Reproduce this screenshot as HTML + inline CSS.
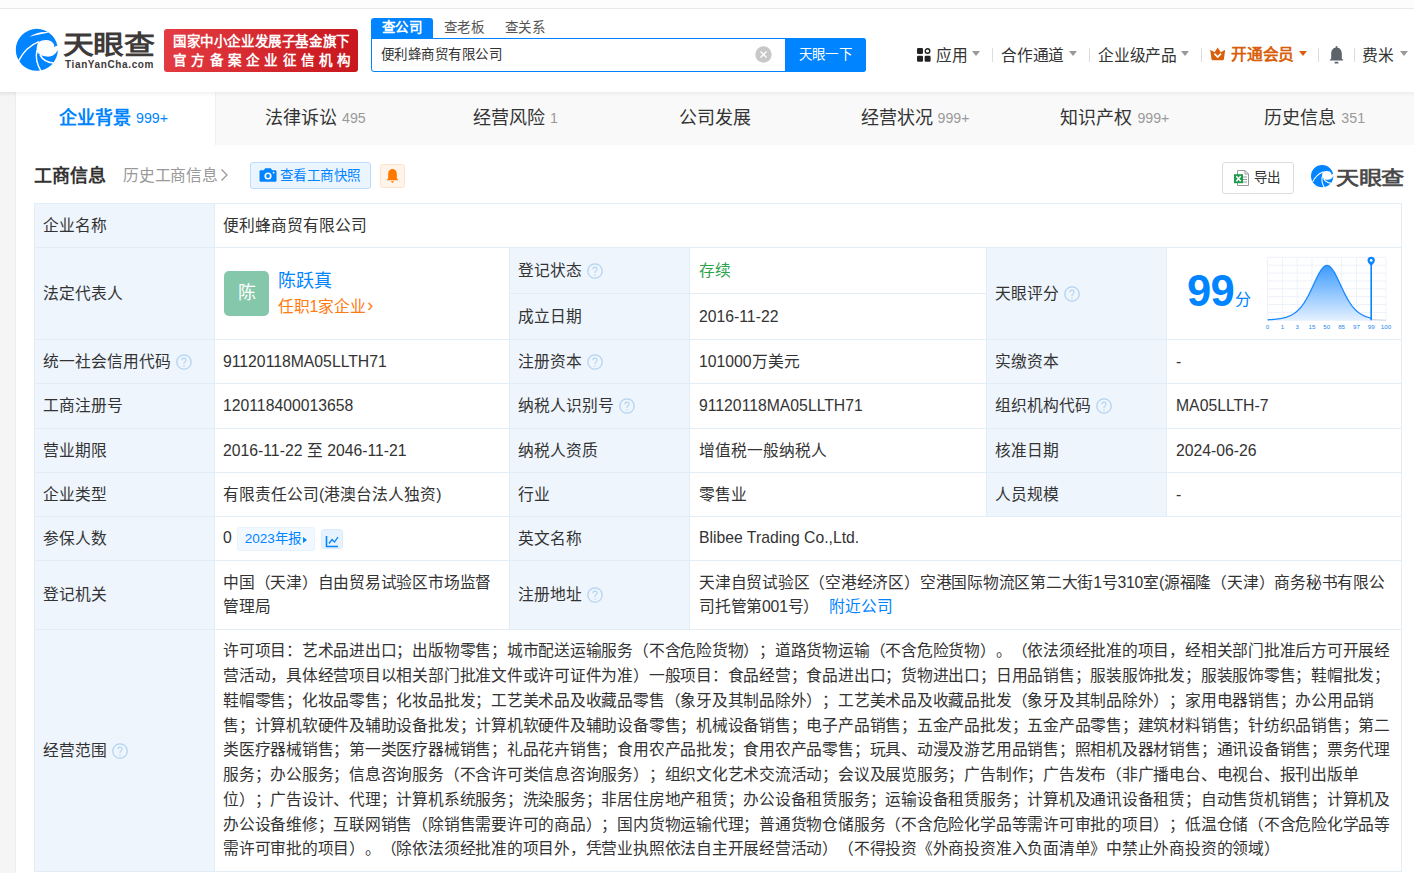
<!DOCTYPE html>
<html lang="zh-CN"><head><meta charset="utf-8">
<style>
*{margin:0;padding:0;box-sizing:border-box}
html,body{width:1414px;height:873px;overflow:hidden}
body{background:#f5f5f5;font-family:"Liberation Sans",sans-serif;color:#333;position:relative;text-spacing-trim:space-all;-webkit-font-smoothing:antialiased}
.a{position:absolute;white-space:nowrap}
#top{position:absolute;left:0;top:0;width:1414px;height:92px;background:#fff;border-top:8px solid #fdfdfd;box-shadow:0 1px 4px rgba(0,0,0,.05)}
#topline{position:absolute;left:0;top:8px;width:1414px;height:1px;background:#e9e9e9;z-index:3}
#card{position:absolute;left:16px;top:92px;width:1410px;height:800px;background:#fff}
#tabs{position:absolute;left:16px;top:92px;width:1398px;height:53px;background:#f9f9f9}
.tab{position:absolute;top:0;height:53px;width:199.8px;text-align:center;font-size:18px;line-height:52px;color:#333}
.tab .n{font-size:14.2px;color:#999;margin-left:5px;position:relative;top:-1.5px}
.tab.on{background:#fff;color:#0084ff;font-weight:bold}
.tab.on .n{color:#0084ff;font-weight:normal}
.tbl{position:absolute;left:34px;top:203px;width:1368px;height:669px;border:1px solid #e3edf6}
.c{position:absolute;font-size:15.75px;line-height:22px;color:#333;display:flex;align-items:center;white-space:nowrap}
.l{background:#eef5fd}
.q{display:block;flex:none;margin-left:5px;position:relative;top:0}
.blue{color:#0084ff}
.hl{position:absolute;height:1px;background:#e3edf6}
.vl{position:absolute;width:1px;background:#e3edf6}
.ml{position:relative;top:0.3px;line-height:24.75px;white-space:nowrap;letter-spacing:-0.23px}
.near{color:#0084ff;margin-left:10px}
.rep{position:relative;top:0.5px;border:1px solid #e9f2fc;display:inline-block;height:24px;line-height:22px;padding:0 7px 0 7px;margin-left:5px;background:#f2f8ff;border-radius:3px;color:#0084ff;font-size:13.5px}
.tri{display:inline-block;width:0;height:0;border-left:4.5px solid #0084ff;border-top:3.5px solid transparent;border-bottom:3.5px solid transparent;margin-left:2px;vertical-align:0px}
.chi{position:relative;top:0.5px;border:1px solid #dcebfb;display:inline-block;width:22px;height:20px;margin-left:6px;background:#e6f2ff;border-radius:3px;text-align:center;padding-top:2px}
.nv{top:45px;font-size:15.75px;line-height:22px;color:#333;letter-spacing:-0.23px}
.tr{position:absolute;top:51px;width:0;height:0;border-left:4.5px solid transparent;border-right:4.5px solid transparent;border-top:5px solid #999}
.sep{position:absolute;top:48px;width:1px;height:14px;background:#ddd}
</style></head><body>
<div id="top"></div>
<div id="topline"></div>

<!-- logo -->
<svg class="a" style="left:12px;top:25px" width="50" height="50" viewBox="0 0 50 50">
<circle cx="24.8" cy="24.8" r="21" fill="#0084ff"/>
<path fill="#fff" d="M26.6 17C31 14.2 39.5 13.8 42 19.5C42.5 20.5 42.2 21.5 41.6 22L47 20V24C45.8 25 45 26 44.5 27C42 31 38 31.8 35 31.6C31.5 31.3 29.5 30.8 27.8 29.6C26 28.3 24.8 26.8 24.6 25.8C24.6 21.5 25.3 18.5 26.6 17Z"/>
<path stroke="#fff" stroke-width="1.5" fill="none" d="M6.5 36.2C10 29 17 20.5 26.9 16.6"/>
<path stroke="#fff" stroke-width="1.5" fill="none" d="M25 25.5C23.3 32 25.3 40 29.2 46.5"/>
<path stroke="#fff" stroke-width="1.7" fill="none" d="M28 29.8C30.5 34.5 35 37.5 41.5 38"/>
<path fill="#fff" d="M17.5 11.8C23 8 31 6.3 37 7.5C31 8.7 24 10 17.5 11.8Z"/>
</svg>
<div class="a" style="left:63px;top:27.5px;font-size:30px;line-height:40px;font-weight:bold;color:#3e3a39;letter-spacing:-0.5px;transform:scale(1.03,0.857);transform-origin:0 0">天眼查</div>
<div class="a" style="left:65px;top:58.2px;font-size:10px;line-height:14px;font-weight:bold;color:#3e3a39;letter-spacing:0.62px">TianYanCha.com</div>

<!-- red badge -->
<div class="a" style="left:164px;top:29px;width:194px;height:43px;border-radius:3px;background:linear-gradient(100deg,#e33c42,#c8161d)"></div>
<div class="a" style="left:173px;top:33px;font-size:13.5px;font-weight:bold;color:#fff;line-height:18px;letter-spacing:0.6px">国家中小企业发展子基金旗下</div>
<div class="a" style="left:173px;top:52px;font-size:13.5px;font-weight:bold;color:#fff;line-height:18px;letter-spacing:5.25px">官方备案企业征信机构</div>

<!-- search -->
<div class="a" style="left:371px;top:18px;width:62px;height:21px;background:#0084ff;border-radius:3px 3px 0 0"></div>
<div class="a" style="left:382px;top:18px;font-size:13.5px;line-height:20px;color:#fff;font-weight:bold;letter-spacing:0.45px">查公司</div>
<div class="a" style="left:444px;top:18px;font-size:13.5px;line-height:20px;color:#555;letter-spacing:0.45px">查老板</div>
<div class="a" style="left:505px;top:18px;font-size:13.5px;line-height:20px;color:#555;letter-spacing:0.45px">查关系</div>
<div class="a" style="left:371px;top:38px;width:495px;height:34px;border:1px solid #0084ff;border-radius:0 3px 3px 3px;background:#fff"></div>
<div class="a" style="left:381px;top:45px;font-size:13.5px;line-height:20px;color:#333;letter-spacing:0.45px">便利蜂商贸有限公司</div>
<svg class="a" style="left:755px;top:46px" width="17" height="17" viewBox="0 0 17 17"><circle cx="8.5" cy="8.5" r="8.2" fill="#c8c8c8"/><path d="M5.5 5.5l6 6M11.5 5.5l-6 6" stroke="#fff" stroke-width="1.3"/></svg>
<div class="a" style="left:785px;top:38px;width:81px;height:34px;background:#0084ff;border-radius:0 3px 3px 0;color:#fff;font-size:13.5px;line-height:34px;text-align:center;letter-spacing:0.45px">天眼一下</div>

<!-- right nav -->
<svg class="a" style="left:917px;top:48px" width="14" height="14" viewBox="0 0 14 14"><rect x="0" y="0" width="6" height="6" rx="1.3" fill="#222"/><circle cx="10.5" cy="3" r="2.3" fill="none" stroke="#222" stroke-width="1.4"/><rect x="0" y="7.7" width="6" height="6" rx="1.3" fill="#222"/><rect x="7.6" y="7.7" width="6" height="6" rx="1.3" fill="#222"/></svg>
<div class="a nv" style="left:936px">应用</div><i class="tr" style="left:972px"></i><i class="sep" style="left:992px"></i>
<div class="a nv" style="left:1001px">合作通道</div><i class="tr" style="left:1069px"></i><i class="sep" style="left:1089px"></i>
<div class="a nv" style="left:1098px">企业级产品</div><i class="tr" style="left:1181px"></i><i class="sep" style="left:1201px"></i>
<svg class="a" style="left:1210px;top:47px" width="16" height="14" viewBox="0 0 16 14"><path d="M.2 2.8L4.6 5.2 7.7 .6 10.8 5.2 15.2 2.8 13.9 12.2Q13.7 13.3 12.7 13.3H2.7Q1.7 13.3 1.5 12.2Z" fill="#d9600b"/><path d="M4.4 6.6L7.7 10.1 11 6.6" fill="none" stroke="#fff" stroke-width="1.7"/></svg>
<div class="a nv" style="left:1231px;top:44px;color:#d9600b;font-weight:bold">开通会员</div><i class="tr" style="left:1299px;border-top-color:#d9600b"></i><i class="sep" style="left:1318px"></i>
<svg class="a" style="left:1328px;top:46px" width="17" height="19" viewBox="0 0 17 19"><path d="M8.5 1.5C5 1.5 3.2 4.5 3.2 7.5V12.5L1.5 14.5H15.5L13.8 12.5V7.5C13.8 4.5 12 1.5 8.5 1.5Z" fill="#5c636b"/><rect x="6.5" y="15.8" width="4" height="1.8" rx=".9" fill="#5c636b"/><rect x="7.6" y="0" width="1.8" height="2.5" rx=".9" fill="#5c636b"/></svg>
<i class="sep" style="left:1354px"></i>
<div class="a nv" style="left:1362px">费米</div><i class="tr" style="left:1400px"></i>

<!-- card -->
<div id="card"></div>
<div class="a" style="left:15px;top:92px;width:1px;height:781px;background:#ededed"></div>
<div id="tabs">
 <div class="tab on" style="left:0;width:199px;padding-right:4px">企业背景<span class="n">999+</span></div>
 <div class="tab" style="left:199px;border-left:1px solid #f0f0f0">法律诉讼<span class="n">495</span></div>
 <div class="tab" style="left:399.6px">经营风险<span class="n">1</span></div>
 <div class="tab" style="left:599.4px">公司发展</div>
 <div class="tab" style="left:799.2px">经营状况<span class="n">999+</span></div>
 <div class="tab" style="left:999.0px">知识产权<span class="n">999+</span></div>
 <div class="tab" style="left:1198.8px">历史信息<span class="n">351</span></div>
</div>

<div class="a" style="left:0;top:92px;width:1414px;height:5px;background:linear-gradient(rgba(0,0,0,.045),rgba(0,0,0,0))"></div>
<div class="a" style="left:34px;top:164px;font-size:18px;font-weight:bold;color:#333;line-height:24px">工商信息</div>
<div class="a" style="left:123px;top:165px;font-size:15.75px;color:#999;line-height:22px;letter-spacing:-0.23px">历史工商信息</div>
<svg class="a" style="left:220px;top:168px" width="9" height="14" viewBox="0 0 9 14"><path d="M1.5 1.5L7 7 1.5 12.5" stroke="#999" stroke-width="1.3" fill="none"/></svg>
<div class="a" style="left:250px;top:162px;width:121px;height:27px;background:#ebf5ff;border:1px solid #bcdcfb;border-radius:3px"></div>
<svg class="a" style="left:259px;top:167px" width="18" height="16" viewBox="0 0 18 16"><path d="M6.2 1.2H11.8L13.2 3.2H16.2Q17.5 3.2 17.5 4.5V13.5Q17.5 14.8 16.2 14.8H1.8Q.5 14.8 .5 13.5V4.5Q.5 3.2 1.8 3.2H4.8Z" fill="#0084ff"/><circle cx="9" cy="9" r="3.6" fill="#fff"/><circle cx="9" cy="9" r="1.9" fill="#0084ff"/><circle cx="14.6" cy="5.6" r=".9" fill="#fff"/></svg>
<div class="a" style="left:280px;top:165px;font-size:13.5px;line-height:22px;color:#0084ff;letter-spacing:0.45px">查看工商快照</div>
<div class="a" style="left:380px;top:164px;width:25px;height:24px;background:#fff4ea;border:1px solid #ffe2c9;border-radius:3px"></div>
<svg class="a" style="left:386px;top:168px" width="13" height="16" viewBox="0 0 13 16"><path d="M6.5 1C3.6 1 2.2 3.5 2.2 6V10.2L.6 12.2H12.4L10.8 10.2V6C10.8 3.5 9.4 1 6.5 1Z" fill="#ff7800"/><path d="M4.8 13.2H8.2L6.5 14.9Z" fill="#ff7800"/></svg>

<div class="a" style="left:1222px;top:162px;width:72px;height:32px;border:1px solid #dcdcdc;border-radius:3px;background:#fff"></div>
<svg class="a" style="left:1233px;top:169px" width="17" height="18" viewBox="0 0 17 18"><path d="M4.5 1.5H12L15.5 5V16.5H4.5Z" fill="#fff" stroke="#999" stroke-width="1"/><path d="M12 1.5V5H15.5" fill="none" stroke="#999" stroke-width="1"/><path d="M10 8H14M10 10.5H14M10 13H14" stroke="#999" stroke-width="1"/><rect x="1" y="5.2" width="9" height="9" fill="#1c9b4a"/><path d="M3.3 7.2L7.7 12.2M7.7 7.2L3.3 12.2" stroke="#fff" stroke-width="1.5"/></svg>
<div class="a" style="left:1254px;top:167px;font-size:13.5px;line-height:22px;color:#333;letter-spacing:0.45px">导出</div>
<svg class="a" style="left:1309px;top:163px" width="26.5" height="26.5" viewBox="0 0 50 50">
<circle cx="24.8" cy="24.8" r="21" fill="#0084ff"/>
<path fill="#fff" d="M26.6 17C31 14.2 39.5 13.8 42 19.5C42.5 20.5 42.2 21.5 41.6 22L47 20V24C45.8 25 45 26 44.5 27C42 31 38 31.8 35 31.6C31.5 31.3 29.5 30.8 27.8 29.6C26 28.3 24.8 26.8 24.6 25.8C24.6 21.5 25.3 18.5 26.6 17Z"/>
<path stroke="#fff" stroke-width="2" fill="none" d="M6.5 36.2C10 29 17 20.5 26.9 16.6"/>
<path stroke="#fff" stroke-width="2" fill="none" d="M25 25.5C23.3 32 25.3 40 29.2 46.5"/>
<path stroke="#fff" stroke-width="2.2" fill="none" d="M28 29.8C30.5 34.5 35 37.5 41.5 38"/>
</svg>
<div class="a" style="left:1336px;top:165.5px;font-size:22px;line-height:30px;font-weight:bold;color:#4a4a4a;letter-spacing:-0.5px;transform:scale(1.05,0.87);transform-origin:0 0">天眼查</div>

<div class="a" style="left:34px;top:203px;width:180px;height:668px;background:#eef5fd"></div>
<div class="a" style="left:509px;top:247px;width:180px;height:382px;background:#eef5fd"></div>
<div class="a" style="left:986px;top:247px;width:180px;height:269px;background:#eef5fd"></div>
<div class="hl" style="left:34px;top:203px;width:1368px"></div>
<div class="hl" style="left:34px;top:247px;width:1368px"></div>
<div class="hl" style="left:509px;top:293px;width:478px"></div>
<div class="hl" style="left:34px;top:339px;width:1368px"></div>
<div class="hl" style="left:34px;top:383px;width:1368px"></div>
<div class="hl" style="left:34px;top:428px;width:1368px"></div>
<div class="hl" style="left:34px;top:472px;width:1368px"></div>
<div class="hl" style="left:34px;top:516px;width:1368px"></div>
<div class="hl" style="left:34px;top:560px;width:1368px"></div>
<div class="hl" style="left:34px;top:629px;width:1368px"></div>
<div class="hl" style="left:34px;top:871px;width:1368px"></div>
<div class="vl" style="left:34px;top:203px;height:669px"></div>
<div class="vl" style="left:214px;top:203px;height:669px"></div>
<div class="vl" style="left:1401px;top:203px;height:669px"></div>
<div class="vl" style="left:509px;top:247px;height:383px"></div>
<div class="vl" style="left:689px;top:247px;height:383px"></div>
<div class="vl" style="left:986px;top:247px;height:270px"></div>
<div class="vl" style="left:1166px;top:247px;height:270px"></div>
<div class="c " style="left:43px;top:204px;width:170px;height:43px">企业名称</div>
<div class="c " style="left:223px;top:204px;width:1177px;height:43px">便利蜂商贸有限公司</div>
<div class="c " style="left:43px;top:248px;width:170px;height:91px">法定代表人</div>
<div class="c " style="left:223px;top:248px;width:285px;height:91px"><div style="position:absolute;left:1px;top:23px;width:45px;height:45px;border-radius:5px;background:#85c7ab;color:#fff;font-size:18px;line-height:45px;text-align:center">陈</div>
<div style="position:absolute;left:54.5px;top:21px;font-size:18px;line-height:24px;color:#0084ff">陈跃真</div>
<div style="position:absolute;left:54.5px;top:48px;font-size:15.75px;line-height:22px;color:#ff7a0f">任职1家企业<span style="font-size:18px;line-height:10px;position:relative;top:-1px;margin-left:1px">›</span></div></div>
<div class="c " style="left:517.5px;top:248px;width:171px;height:45px">登记状态<svg class="q" width="16" height="16" viewBox="0 0 16 16"><circle cx="8" cy="8" r="7.2" fill="none" stroke="#b3d3f0" stroke-width="1.3"/><path d="M5.9 6.3C5.9 5 6.8 4.1 8 4.1S10.1 5 10.1 6.1C10.1 7.5 8 7.7 8 9.5V10.1" fill="none" stroke="#b3d3f0" stroke-width="1.1"/><circle cx="8" cy="11.9" r=".75" fill="#b3d3f0"/></svg></div>
<div class="c " style="left:699px;top:248px;width:287px;height:45px"><span style="color:#2aa34a">存续</span></div>
<div class="c " style="left:517.5px;top:294px;width:171px;height:45px">成立日期</div>
<div class="c " style="left:699px;top:294px;width:287px;height:45px">2016-11-22</div>
<div class="c " style="left:995px;top:248px;width:171px;height:91px">天眼评分<svg class="q" width="16" height="16" viewBox="0 0 16 16"><circle cx="8" cy="8" r="7.2" fill="none" stroke="#b3d3f0" stroke-width="1.3"/><path d="M5.9 6.3C5.9 5 6.8 4.1 8 4.1S10.1 5 10.1 6.1C10.1 7.5 8 7.7 8 9.5V10.1" fill="none" stroke="#b3d3f0" stroke-width="1.1"/><circle cx="8" cy="11.9" r=".75" fill="#b3d3f0"/></svg></div>
<div class="c " style="left:1176px;top:248px;width:225px;height:91px"></div>
<div class="c " style="left:43px;top:340px;width:170px;height:43px">统一社会信用代码<svg class="q" width="16" height="16" viewBox="0 0 16 16"><circle cx="8" cy="8" r="7.2" fill="none" stroke="#b3d3f0" stroke-width="1.3"/><path d="M5.9 6.3C5.9 5 6.8 4.1 8 4.1S10.1 5 10.1 6.1C10.1 7.5 8 7.7 8 9.5V10.1" fill="none" stroke="#b3d3f0" stroke-width="1.1"/><circle cx="8" cy="11.9" r=".75" fill="#b3d3f0"/></svg></div>
<div class="c " style="left:223px;top:340px;width:285px;height:43px">91120118MA05LLTH71</div>
<div class="c " style="left:517.5px;top:340px;width:171px;height:43px">注册资本<svg class="q" width="16" height="16" viewBox="0 0 16 16"><circle cx="8" cy="8" r="7.2" fill="none" stroke="#b3d3f0" stroke-width="1.3"/><path d="M5.9 6.3C5.9 5 6.8 4.1 8 4.1S10.1 5 10.1 6.1C10.1 7.5 8 7.7 8 9.5V10.1" fill="none" stroke="#b3d3f0" stroke-width="1.1"/><circle cx="8" cy="11.9" r=".75" fill="#b3d3f0"/></svg></div>
<div class="c " style="left:699px;top:340px;width:287px;height:43px">101000万美元</div>
<div class="c " style="left:995px;top:340px;width:171px;height:43px">实缴资本</div>
<div class="c " style="left:1176px;top:340px;width:225px;height:43px">-</div>
<div class="c " style="left:43px;top:384px;width:170px;height:44px">工商注册号</div>
<div class="c " style="left:223px;top:384px;width:285px;height:44px">120118400013658</div>
<div class="c " style="left:517.5px;top:384px;width:171px;height:44px">纳税人识别号<svg class="q" width="16" height="16" viewBox="0 0 16 16"><circle cx="8" cy="8" r="7.2" fill="none" stroke="#b3d3f0" stroke-width="1.3"/><path d="M5.9 6.3C5.9 5 6.8 4.1 8 4.1S10.1 5 10.1 6.1C10.1 7.5 8 7.7 8 9.5V10.1" fill="none" stroke="#b3d3f0" stroke-width="1.1"/><circle cx="8" cy="11.9" r=".75" fill="#b3d3f0"/></svg></div>
<div class="c " style="left:699px;top:384px;width:287px;height:44px">91120118MA05LLTH71</div>
<div class="c " style="left:995px;top:384px;width:171px;height:44px">组织机构代码<svg class="q" width="16" height="16" viewBox="0 0 16 16"><circle cx="8" cy="8" r="7.2" fill="none" stroke="#b3d3f0" stroke-width="1.3"/><path d="M5.9 6.3C5.9 5 6.8 4.1 8 4.1S10.1 5 10.1 6.1C10.1 7.5 8 7.7 8 9.5V10.1" fill="none" stroke="#b3d3f0" stroke-width="1.1"/><circle cx="8" cy="11.9" r=".75" fill="#b3d3f0"/></svg></div>
<div class="c " style="left:1176px;top:384px;width:225px;height:44px">MA05LLTH-7</div>
<div class="c " style="left:43px;top:429px;width:170px;height:43px">营业期限</div>
<div class="c " style="left:223px;top:429px;width:285px;height:43px">2016-11-22 至 2046-11-21</div>
<div class="c " style="left:517.5px;top:429px;width:171px;height:43px">纳税人资质</div>
<div class="c " style="left:699px;top:429px;width:287px;height:43px">增值税一般纳税人</div>
<div class="c " style="left:995px;top:429px;width:171px;height:43px">核准日期</div>
<div class="c " style="left:1176px;top:429px;width:225px;height:43px">2024-06-26</div>
<div class="c " style="left:43px;top:473px;width:170px;height:43px">企业类型</div>
<div class="c " style="left:223px;top:473px;width:285px;height:43px">有限责任公司(港澳台法人独资)</div>
<div class="c " style="left:517.5px;top:473px;width:171px;height:43px">行业</div>
<div class="c " style="left:699px;top:473px;width:287px;height:43px">零售业</div>
<div class="c " style="left:995px;top:473px;width:171px;height:43px">人员规模</div>
<div class="c " style="left:1176px;top:473px;width:225px;height:43px">-</div>
<div class="c " style="left:43px;top:517px;width:170px;height:43px">参保人数</div>
<div class="c " style="left:223px;top:517px;width:285px;height:43px"><span style="position:relative;top:-0.8px">0</span><span class="rep">2023年报<b class="tri"></b></span><span class="chi"><svg width="14" height="13" viewBox="0 0 14 13"><path d="M1.5 1v10.5H13" stroke="#0084ff" stroke-width="1.6" fill="none"/><path d="M4 8.5l3-4 2.5 2.5 3.5-5" stroke="#0084ff" stroke-width="1.3" fill="none"/></svg></span></div>
<div class="c " style="left:517.5px;top:517px;width:171px;height:43px">英文名称</div>
<div class="c " style="left:699px;top:517px;width:702px;height:43px"><span style="position:relative;top:-1px">Blibee Trading Co.,Ltd.</span></div>
<div class="c " style="left:43px;top:561px;width:170px;height:68px">登记机关</div>
<div class="c " style="left:223px;top:561px;width:285px;height:68px"><div class="ml">中国（天津）自由贸易试验区市场监督<br>管理局</div></div>
<div class="c " style="left:517.5px;top:561px;width:171px;height:68px">注册地址<svg class="q" width="16" height="16" viewBox="0 0 16 16"><circle cx="8" cy="8" r="7.2" fill="none" stroke="#b3d3f0" stroke-width="1.3"/><path d="M5.9 6.3C5.9 5 6.8 4.1 8 4.1S10.1 5 10.1 6.1C10.1 7.5 8 7.7 8 9.5V10.1" fill="none" stroke="#b3d3f0" stroke-width="1.1"/><circle cx="8" cy="11.9" r=".75" fill="#b3d3f0"/></svg></div>
<div class="c " style="left:699px;top:561px;width:702px;height:68px"><div class="ml">天津自贸试验区（空港经济区）空港国际物流区第二大街1号310室(源福隆（天津）商务秘书有限公<br>司托管第001号）<a class="near">附近公司</a></div></div>
<div class="c " style="left:43px;top:630px;width:170px;height:241px">经营范围<svg class="q" width="16" height="16" viewBox="0 0 16 16"><circle cx="8" cy="8" r="7.2" fill="none" stroke="#b3d3f0" stroke-width="1.3"/><path d="M5.9 6.3C5.9 5 6.8 4.1 8 4.1S10.1 5 10.1 6.1C10.1 7.5 8 7.7 8 9.5V10.1" fill="none" stroke="#b3d3f0" stroke-width="1.1"/><circle cx="8" cy="11.9" r=".75" fill="#b3d3f0"/></svg></div>
<div class="c " style="left:223px;top:630px;width:1177px;height:241px"><div class="ml">许可项目：艺术品进出口；出版物零售；城市配送运输服务（不含危险货物）；道路货物运输（不含危险货物）。（依法须经批准的项目，经相关部门批准后方可开展经<br>营活动，具体经营项目以相关部门批准文件或许可证件为准）一般项目：食品经营；食品进出口；货物进出口；日用品销售；服装服饰批发；服装服饰零售；鞋帽批发；<br>鞋帽零售；化妆品零售；化妆品批发；工艺美术品及收藏品零售（象牙及其制品除外）；工艺美术品及收藏品批发（象牙及其制品除外）；家用电器销售；办公用品销<br>售；计算机软硬件及辅助设备批发；计算机软硬件及辅助设备零售；机械设备销售；电子产品销售；五金产品批发；五金产品零售；建筑材料销售；针纺织品销售；第二<br>类医疗器械销售；第一类医疗器械销售；礼品花卉销售；食用农产品批发；食用农产品零售；玩具、动漫及游艺用品销售；照相机及器材销售；通讯设备销售；票务代理<br>服务；办公服务；信息咨询服务（不含许可类信息咨询服务）；组织文化艺术交流活动；会议及展览服务；广告制作；广告发布（非广播电台、电视台、报刊出版单<br>位）；广告设计、代理；计算机系统服务；洗染服务；非居住房地产租赁；办公设备租赁服务；运输设备租赁服务；计算机及通讯设备租赁；自动售货机销售；计算机及<br>办公设备维修；互联网销售（除销售需要许可的商品）；国内货物运输代理；普通货物仓储服务（不含危险化学品等需许可审批的项目）；低温仓储（不含危险化学品等<br>需许可审批的项目）。（除依法须经批准的项目外，凭营业执照依法自主开展经营活动）（不得投资《外商投资准入负面清单》中禁止外商投资的领域）</div></div>

<svg class="a" style="left:1262px;top:252px" width="132" height="80" viewBox="0 0 132 80">
<defs><linearGradient id="gf" x1="0" y1="0" x2="0" y2="1"><stop offset="0" stop-color="#3d9bff"/><stop offset="1" stop-color="#e3f0ff"/></linearGradient></defs>
<path d="M5.6 5.3V68.3" stroke="#edf2f9" stroke-width="1"/><path d="M20.4 5.3V68.3" stroke="#edf2f9" stroke-width="1"/><path d="M35.2 5.3V68.3" stroke="#edf2f9" stroke-width="1"/><path d="M50.0 5.3V68.3" stroke="#edf2f9" stroke-width="1"/><path d="M64.8 5.3V68.3" stroke="#edf2f9" stroke-width="1"/><path d="M79.6 5.3V68.3" stroke="#edf2f9" stroke-width="1"/><path d="M94.4 5.3V68.3" stroke="#edf2f9" stroke-width="1"/><path d="M109.2 5.3V68.3" stroke="#edf2f9" stroke-width="1"/><path d="M124.0 5.3V68.3" stroke="#edf2f9" stroke-width="1"/><path d="M5.6 5.3H124" stroke="#edf2f9" stroke-width="1"/><path d="M5.6 13.2H124" stroke="#edf2f9" stroke-width="1"/><path d="M5.6 21.1H124" stroke="#edf2f9" stroke-width="1"/><path d="M5.6 28.9H124" stroke="#edf2f9" stroke-width="1"/><path d="M5.6 36.8H124" stroke="#edf2f9" stroke-width="1"/><path d="M5.6 44.7H124" stroke="#edf2f9" stroke-width="1"/><path d="M5.6 52.5H124" stroke="#edf2f9" stroke-width="1"/><path d="M5.6 60.4H124" stroke="#edf2f9" stroke-width="1"/><path d="M5.6 68.3H124" stroke="#edf2f9" stroke-width="1"/>
<path d="M5.6 67.79 L6.4 67.76 L7.2 67.71 L8.0 67.67 L8.8 67.62 L9.6 67.56 L10.4 67.51 L11.2 67.44 L12.0 67.37 L12.8 67.30 L13.6 67.22 L14.4 67.13 L15.2 67.04 L16.0 66.93 L16.8 66.82 L17.6 66.70 L18.4 66.57 L19.2 66.42 L20.0 66.27 L20.8 66.10 L21.6 65.91 L22.4 65.71 L23.2 65.50 L24.0 65.26 L24.8 65.01 L25.6 64.73 L26.4 64.44 L27.2 64.11 L28.0 63.76 L28.8 63.38 L29.6 62.98 L30.4 62.53 L31.2 62.06 L32.0 61.54 L32.8 60.99 L33.6 60.39 L34.4 59.75 L35.2 59.06 L36.0 58.32 L36.8 57.53 L37.6 56.69 L38.4 55.79 L39.2 54.83 L40.0 53.81 L40.8 52.73 L41.6 51.59 L42.4 50.38 L43.2 49.11 L44.0 47.78 L44.8 46.39 L45.6 44.94 L46.4 43.43 L47.2 41.87 L48.0 40.27 L48.8 38.62 L49.6 36.94 L50.4 35.23 L51.2 33.50 L52.0 31.77 L52.8 30.04 L53.6 28.32 L54.4 26.64 L55.2 25.00 L56.0 23.41 L56.8 21.90 L57.6 20.47 L58.4 19.14 L59.2 17.92 L60.0 16.83 L60.8 15.87 L61.6 15.07 L62.4 14.43 L63.2 13.95 L64.0 13.64 L64.8 13.51 L65.6 13.55 L66.4 13.77 L67.2 14.16 L68.0 14.73 L68.8 15.45 L69.6 16.33 L70.4 17.36 L71.2 18.51 L72.0 19.79 L72.8 21.17 L73.6 22.64 L74.4 24.20 L75.2 25.81 L76.0 27.48 L76.8 29.18 L77.6 30.90 L78.4 32.63 L79.2 34.37 L80.0 36.09 L80.8 37.78 L81.6 39.45 L82.4 41.08 L83.2 42.66 L84.0 44.19 L84.8 45.67 L85.6 47.09 L86.4 48.46 L87.2 49.76 L88.0 50.99 L88.8 52.17 L89.6 53.28 L90.4 54.33 L91.2 55.32 L92.0 56.25 L92.8 57.12 L93.6 57.94 L94.4 58.70 L95.2 59.41 L96.0 60.08 L96.8 60.69 L97.6 61.27 L98.4 61.80 L99.2 62.30 L100.0 62.76 L100.8 63.18 L101.6 63.58 L102.4 63.94 L103.2 64.28 L104.0 64.59 L104.8 64.88 L105.6 65.14 L106.4 65.38 L107.2 65.61 L108.0 65.82 L108.8 66.01 L109.2 66.10 L109.2 68.3 L5.6 68.3Z" fill="url(#gf)"/>
<path d="M5.6 67.79 L6.4 67.76 L7.2 67.71 L8.0 67.67 L8.8 67.62 L9.6 67.56 L10.4 67.51 L11.2 67.44 L12.0 67.37 L12.8 67.30 L13.6 67.22 L14.4 67.13 L15.2 67.04 L16.0 66.93 L16.8 66.82 L17.6 66.70 L18.4 66.57 L19.2 66.42 L20.0 66.27 L20.8 66.10 L21.6 65.91 L22.4 65.71 L23.2 65.50 L24.0 65.26 L24.8 65.01 L25.6 64.73 L26.4 64.44 L27.2 64.11 L28.0 63.76 L28.8 63.38 L29.6 62.98 L30.4 62.53 L31.2 62.06 L32.0 61.54 L32.8 60.99 L33.6 60.39 L34.4 59.75 L35.2 59.06 L36.0 58.32 L36.8 57.53 L37.6 56.69 L38.4 55.79 L39.2 54.83 L40.0 53.81 L40.8 52.73 L41.6 51.59 L42.4 50.38 L43.2 49.11 L44.0 47.78 L44.8 46.39 L45.6 44.94 L46.4 43.43 L47.2 41.87 L48.0 40.27 L48.8 38.62 L49.6 36.94 L50.4 35.23 L51.2 33.50 L52.0 31.77 L52.8 30.04 L53.6 28.32 L54.4 26.64 L55.2 25.00 L56.0 23.41 L56.8 21.90 L57.6 20.47 L58.4 19.14 L59.2 17.92 L60.0 16.83 L60.8 15.87 L61.6 15.07 L62.4 14.43 L63.2 13.95 L64.0 13.64 L64.8 13.51 L65.6 13.55 L66.4 13.77 L67.2 14.16 L68.0 14.73 L68.8 15.45 L69.6 16.33 L70.4 17.36 L71.2 18.51 L72.0 19.79 L72.8 21.17 L73.6 22.64 L74.4 24.20 L75.2 25.81 L76.0 27.48 L76.8 29.18 L77.6 30.90 L78.4 32.63 L79.2 34.37 L80.0 36.09 L80.8 37.78 L81.6 39.45 L82.4 41.08 L83.2 42.66 L84.0 44.19 L84.8 45.67 L85.6 47.09 L86.4 48.46 L87.2 49.76 L88.0 50.99 L88.8 52.17 L89.6 53.28 L90.4 54.33 L91.2 55.32 L92.0 56.25 L92.8 57.12 L93.6 57.94 L94.4 58.70 L95.2 59.41 L96.0 60.08 L96.8 60.69 L97.6 61.27 L98.4 61.80 L99.2 62.30 L100.0 62.76 L100.8 63.18 L101.6 63.58 L102.4 63.94 L103.2 64.28 L104.0 64.59 L104.8 64.88 L105.6 65.14 L106.4 65.38 L107.2 65.61 L108.0 65.82 L108.8 66.01 L109.2 66.10" fill="none" stroke="#1a88ff" stroke-width="1.3"/>
<path d="M109.2 67.3 L124 68.3" stroke="#d5dbe3" stroke-width="1.2"/>
<path d="M109.2 10V68.3" stroke="#0a84ff" stroke-width="1.6"/>
<path d="M109.2 14C107.4 11.8 105.5 10.3 105.5 8.4A3.7 3.7 0 0 1 112.9 8.4C112.9 10.3 111 11.8 109.2 14Z" fill="#0a84ff"/>
<circle cx="109.2" cy="8.4" r="1.3" fill="#fff"/>
<g font-family="Liberation Sans" font-size="6.2" fill="#1f87f0"><text x="5.6" y="77" text-anchor="middle">0</text><text x="20.4" y="77" text-anchor="middle">1</text><text x="35.2" y="77" text-anchor="middle">3</text><text x="50.0" y="77" text-anchor="middle">15</text><text x="64.8" y="77" text-anchor="middle">50</text><text x="79.6" y="77" text-anchor="middle">85</text><text x="94.4" y="77" text-anchor="middle">97</text><text x="109.2" y="77" text-anchor="middle">99</text><text x="124.0" y="77" text-anchor="middle">100</text></g>
</svg>
<div class="a" style="left:1187px;top:266px;font-size:43.5px;line-height:50px;font-weight:bold;color:#0084ff;letter-spacing:-0.8px">99</div>
<div class="a" style="left:1235px;top:289px;font-size:16px;line-height:22px;color:#0084ff">分</div>
</body></html>
